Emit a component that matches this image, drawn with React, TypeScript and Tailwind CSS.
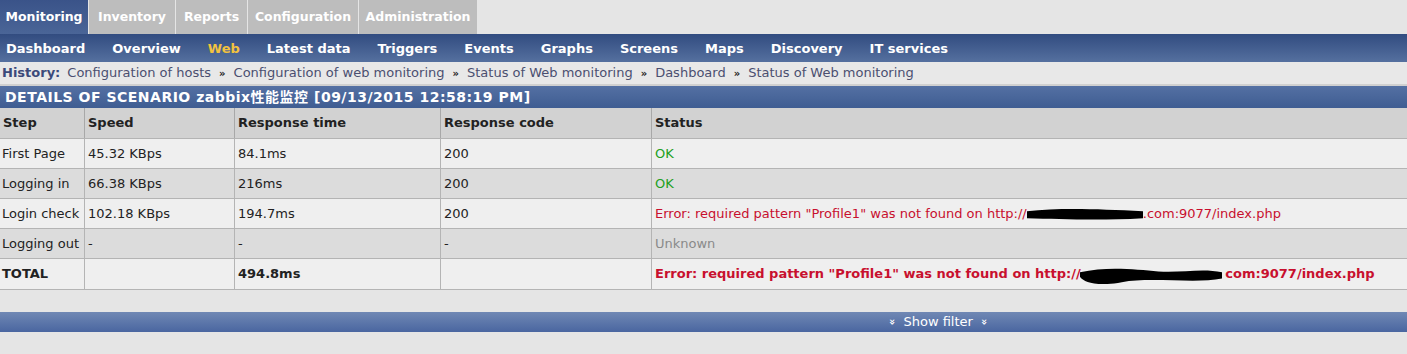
import React from 'react';

const tabs = [
    { name: 'Monitoring', w: 'w-[88px]' },
    { name: 'Inventory', w: 'w-[86px]' },
    { name: 'Reports', w: 'w-[71px]' },
    { name: 'Configuration', w: 'w-[110px]' },
    { name: 'Administration', w: 'w-[118px]' },
];
const subnav = ['Dashboard', 'Overview', 'Web', 'Latest data', 'Triggers', 'Events', 'Graphs', 'Screens', 'Maps', 'Discovery', 'IT services'];
const history = ['Configuration of hosts', 'Configuration of web monitoring', 'Status of Web monitoring', 'Dashboard', 'Status of Web monitoring'];

type Row = { step: string; speed: string; time: string; code: string; status: 'ok' | 'err' | 'unknown' | 'total' };

const rows: Row[] = [
    { step: 'First Page', speed: '45.32 KBps', time: '84.1ms', code: '200', status: 'ok' },
    { step: 'Logging in', speed: '66.38 KBps', time: '216ms', code: '200', status: 'ok' },
    { step: 'Login check', speed: '102.18 KBps', time: '194.7ms', code: '200', status: 'err' },
    { step: 'Logging out', speed: '-', time: '-', code: '-', status: 'unknown' },
    { step: 'TOTAL', speed: '', time: '494.8ms', code: '', status: 'total' },
];

// black marker blob over the hostname
function Redact({ w, h, wavy }: { w: number; h: number; wavy?: boolean }) {
    return (
        <svg width={w} height={h} viewBox={`0 0 ${w} ${h}`} className="inline-block align-middle -mx-[3px]">
            {wavy ? (
                <path d={`M2 ${h * 0.35} C ${w * 0.2} 0, ${w * 0.4} ${h * 0.2}, ${w * 0.55} ${h * 0.3} S ${w * 0.85} ${h * 0.1}, ${w - 2} ${h * 0.35} L ${w - 2} ${h * 0.7} C ${w * 0.8} ${h}, ${w * 0.5} ${h * 0.6}, ${w * 0.3} ${h * 0.9} S 4 ${h * 0.8}, 2 ${h * 0.6} Z`} fill="#000" />
            ) : (
                <path d={`M3 ${h * 0.3} C ${w * 0.3} ${h * 0.05}, ${w * 0.6} ${h * 0.15}, ${w - 3} ${h * 0.3} L ${w - 3} ${h * 0.8} C ${w * 0.6} ${h}, ${w * 0.3} ${h * 0.85}, 3 ${h * 0.8} Z`} fill="#000" />
            )}
        </svg>
    );
}

function Status({ s }: { s: Row['status'] }) {
    if (s === 'ok') return <span className="text-[#22a022]">OK</span>;
    if (s === 'unknown') return <span className="text-[#8a8a8a]">Unknown</span>;
    const bold = s === 'total';
    return (
        <span className={bold ? 'font-bold text-[#c8102e]' : 'text-[#c8102e]'}>
            Error: required pattern "Profile1" was not found on http://
            {bold ? <Redact w={146} h={18} wavy /> : <Redact w={122} h={14} />}
            {bold ? ' ' : '.'}com:9077/index.php
        </span>
    );
}

export default function App() {
    return (
        <div className="w-[1407px] h-[354px] bg-[#e5e5e5] text-[13px] overflow-hidden" style={{ fontFamily: '"DejaVu Sans", Verdana, "Noto Sans CJK SC", sans-serif' }}>
            {/* Main tabs */}
            <div className="flex h-[34px] items-stretch gap-px">
                {tabs.map((t, i) => (
                    <div
                        key={t.name}
                        className={
                            t.w + ' flex items-center justify-center font-bold text-white text-[12.5px] ' +
                            (i === 0 ? 'bg-gradient-to-b from-[#3a5389] to-[#4a6597]' : 'bg-[#bdbdbd]')
                        }
                    >
                        {t.name}
                    </div>
                ))}
            </div>

            {/* Sub nav */}
            <div className="flex h-[28px] items-center gap-[27px] px-[6px] pt-[1px] font-bold text-white bg-gradient-to-b from-[#324c80] to-[#55709f]">
                {subnav.map((s) => (
                    <span key={s} className={s === 'Web' ? 'text-[#f3c33e]' : ''}>{s}</span>
                ))}
            </div>

            {/* History */}
            <div className="h-[24px] flex items-center px-[2px] text-[#4b4f70] bg-[#e8e8e8] border-b-2 border-[#d0d0d0]">
                <span className="font-bold text-[#3b4a7a] mr-[7px]">History:</span>
                {history.map((h, i) => (
                    <span key={i} className="flex items-center">
                        {i > 0 && <span className="mx-[8px] text-[10px] font-bold text-[#222]">»</span>}
                        {h}
                    </span>
                ))}
            </div>

            {/* Title */}
            <div className="h-[22px] flex items-center px-[5px] text-[14px] tracking-[0.5px] font-bold text-white bg-gradient-to-b from-[#5470a3] to-[#3f5d92]">
                DETAILS OF SCENARIO zabbix性能监控 [09/13/2015 12:58:19 PM]
            </div>

            {/* Table */}
            <div className="border-b border-[#b4b4b4]">
                <div className="grid grid-cols-[84px_150px_206px_211px_1fr] h-[31px] bg-[#d2d2d2] font-bold text-[#222] border-b border-[#b4b4b4]">
                    {['Step', 'Speed', 'Response time', 'Response code', 'Status'].map((h, i) => (
                        <div key={h} className={'flex items-center px-[3px] ' + (i > 0 ? 'border-l border-[#a8a8a8]' : '')}>{h}</div>
                    ))}
                </div>
                {rows.map((r, ri) => (
                    <div
                        key={r.step}
                        className={
                            'grid grid-cols-[84px_150px_206px_211px_1fr] h-[30px] text-[#222] border-b border-[#b4b4b4] last:border-b-0 ' +
                            (ri % 2 === 1 ? 'bg-[#dcdcdc]' : 'bg-[#efefef]')
                        }
                    >
                        <div className={'flex items-center px-[2px] whitespace-nowrap ' + (r.status === 'total' ? 'font-bold' : '')}>{r.step}</div>
                        <div className="flex items-center px-[3px] border-l border-[#b4b4b4]">{r.speed}</div>
                        <div className={'flex items-center px-[3px] border-l border-[#b4b4b4] ' + (r.status === 'total' ? 'font-bold' : '')}>{r.time}</div>
                        <div className="flex items-center px-[3px] border-l border-[#b4b4b4]">{r.code}</div>
                        <div className="flex items-center px-[3px] border-l border-[#b4b4b4] whitespace-nowrap"><Status s={r.status} /></div>
                    </div>
                ))}
            </div>

            {/* Show filter */}
            <div className="mt-[22px] h-[20px] flex items-center gap-[8px] pl-[889px] text-white text-[13px] bg-gradient-to-b from-[#7088b4] to-[#4a66a0]">
                <span className="inline-block rotate-90 text-[10px] font-bold leading-none">»</span>
                <span>Show filter</span>
                <span className="inline-block rotate-90 text-[10px] font-bold leading-none">»</span>
            </div>
        </div>
    );
}
